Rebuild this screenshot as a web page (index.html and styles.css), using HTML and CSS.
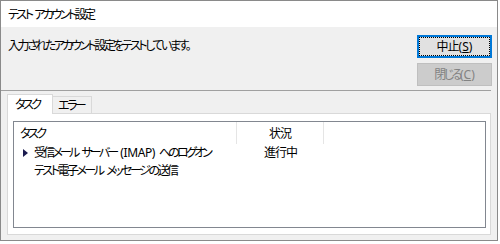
FILE: index.html
```html
<!DOCTYPE html>
<html lang="ja">
<head>
<meta charset="utf-8">
<title>テスト アカウント設定</title>
<link rel="stylesheet" href="styles.css">
</head>
<body>
<div class="window">
  <div class="titlebar">テスト アカウント設定</div>
  <div class="content">
    <div class="top">
      <div class="message">入力されたアカウント設定をテストしています。</div>
      <div class="buttons">
        <button class="btn default"><span class="k">中止</span><span class="lat">(<u>S</u>)</span></button>
        <button class="btn disabled" disabled>閉じる<span class="lat">(<u>C</u>)</span></button>
      </div>
    </div>
    <div class="sep"></div>
    <div class="tabs">
      <div class="tab selected">タスク</div>
      <div class="tab">エラー</div>
    </div>
    <div class="panel">
      <div class="list">
        <div class="header">
          <div class="hcell c1">タスク</div>
          <div class="hcell c2"><span class="k">状況</span></div>
        </div>
        <div class="row">
          <div class="cell c1"><span class="arrow"></span><span class="txt first">受信メール サーバー <span class="lat imap">(IMAP)</span> へのログオン</span></div>
          <div class="cell c2"><span class="k">進行中</span></div>
        </div>
        <div class="row">
          <div class="cell c1"><span class="txt plain">テスト電子メール メッセージの送信</span></div>
          <div class="cell c2"></div>
        </div>
      </div>
    </div>
  </div>
</div>
</body>
</html>
```
FILE: styles.css
```css
* { box-sizing: border-box; }
html, body { margin: 0; padding: 0; background: #ffffff; }
body {
  font-family: "Noto Sans CJK JP", "Noto Sans", sans-serif;
  font-size: 12px;
  font-feature-settings: "palt";
  letter-spacing: -2.5px;
  word-spacing: 3.5px;
  color: #000;
}
.lat {
  font-family: "Noto Sans", sans-serif;
  letter-spacing: 0;
  word-spacing: 0;
  font-size: 12px;
}
.lat.imap {
  letter-spacing: -0.4px;
}
.k {
  letter-spacing: -1px;
}
.window {
  width: 498px;
  height: 241px;
  border: 1px solid #8a8a8a;
  display: flex;
  flex-direction: column;
}
.titlebar {
  height: 26px;
  line-height: 25px;
  padding-left: 7px;
  background: #ffffff;
  flex: none;
  white-space: nowrap;
  word-spacing: 2.5px;
}
.content {
  flex: 1;
  background: #f0f0f0;
  display: flex;
  flex-direction: column;
}
.top {
  display: flex;
  justify-content: space-between;
  padding: 8px 5px 0 7px;
}
.message {
  margin-top: 2px;
  line-height: 16px;
  white-space: nowrap;
}
.buttons {
  display: flex;
  flex-direction: column;
  gap: 5px;
}
.btn {
  width: 75px;
  height: 23px;
  padding: 0;
  font: inherit;
  font-feature-settings: "palt";
  letter-spacing: -2.5px;
  line-height: 20px;
  background: #e1e1e1;
  border: 1px solid #adadad;
  color: #000;
  white-space: nowrap;
}
.btn.default {
  border: 1px solid #0078d7;
  box-shadow: inset 0 0 0 1px #0078d7;
  outline: 1px dotted #000;
  outline-offset: -3px;
}
.btn.disabled {
  background: #cccccc;
  border-color: #bfbfbf;
  color: #838383;
}
.sep {
  height: 1px;
  margin: 4px 6px 0 0;
  background: #a0a0a0;
}
.tabs {
  display: flex;
  margin: 3px 0 0 6px;
  height: 19px;
  align-items: flex-end;
}
.tab {
  height: 17px;
  border: 1px solid #d9d9d9;
  border-bottom: none;
  background: #f0f0f0;
  padding: 0 0 0 5px;
  width: 40px;
  margin-left: -1px;
  line-height: 16px;
  white-space: nowrap;
}
.tab.selected {
  position: relative;
  z-index: 1;
  height: 20px;
  width: 46px;
  margin-left: 0;
  margin-bottom: -1px;
  background: #ffffff;
  padding-left: 7px;
  line-height: 18px;
}
.panel {
  height: 122px;
  margin: 0 6px 0 6px;
  border: 1px solid #d9d9d9;
  background: #ffffff;
  padding: 7px 4px 6px 5px;
}
.list {
  height: 107px;
  border: 1px solid #828790;
  background: #ffffff;
}
.header {
  display: flex;
  height: 22px;
}
.hcell {
  border-right: 1px solid #e5e5e5;
  line-height: 21px;
}
.c1 { width: 223px; padding-left: 6px; white-space: nowrap; }
.c2 { width: 87px; text-align: center; white-space: nowrap; }
.row {
  display: flex;
  height: 17px;
  line-height: 16px;
}
.row .c1 { padding-left: 9px; display: flex; align-items: center; }
.row .c1 .txt.plain { margin-left: 11px; }
.row .c1 .txt.first { margin-left: 6px; letter-spacing: -2.8px; word-spacing: 4px; }
.arrow {
  width: 0;
  height: 0;
  border-top: 4px solid transparent;
  border-bottom: 4px solid transparent;
  border-left: 5px solid #1b1b4f;
}
```
